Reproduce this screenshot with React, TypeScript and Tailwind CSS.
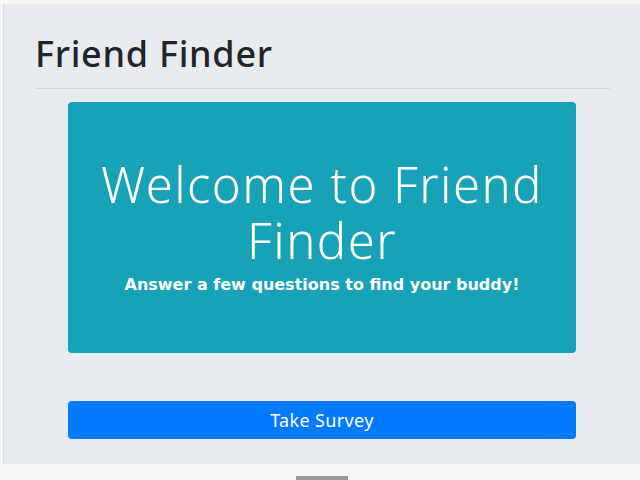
export default function App() {
  return (
    <div className="h-[480px] w-[640px] overflow-hidden bg-[#f7f7f7] pt-[4px] pl-[3px] font-['Noto_Sans',sans-serif]">
      <div className="h-[460px] border-l border-[#d8dbde] bg-[#e9ecef] pt-[28px] pl-[31px] pr-[30px]">
        <h1 className="text-[36px] font-medium leading-[44px] tracking-[0.02em] text-[#212529]">Friend Finder</h1>
        <hr className="mt-[12px] border-t border-[#d3d7db]" />
        <div className="mt-[13px] ml-[33px] mr-[34px] flex h-[251px] flex-col items-center justify-center rounded-[4px] bg-[#17a2b8] pb-[2px] text-center text-white">
          <div className="text-[49px] font-light leading-[56px] tracking-[0.03em]">Welcome to Friend Finder</div>
          <p className="mt-[5px] font-['DejaVu_Sans',sans-serif] text-[16px] font-bold">
            Answer a few questions to find your buddy!
          </p>
        </div>
        <button
          type="button"
          className="mt-[48px] ml-[33px] h-[38px] w-[508px] rounded-[4px] bg-[#007bff] text-[18px] tracking-[0.02em] text-white"
        >
          Take Survey
        </button>
      </div>
      <div className="mx-auto mt-[12px] h-[4px] w-[52px] bg-[#9a9a9a]" />
    </div>
  );
}
